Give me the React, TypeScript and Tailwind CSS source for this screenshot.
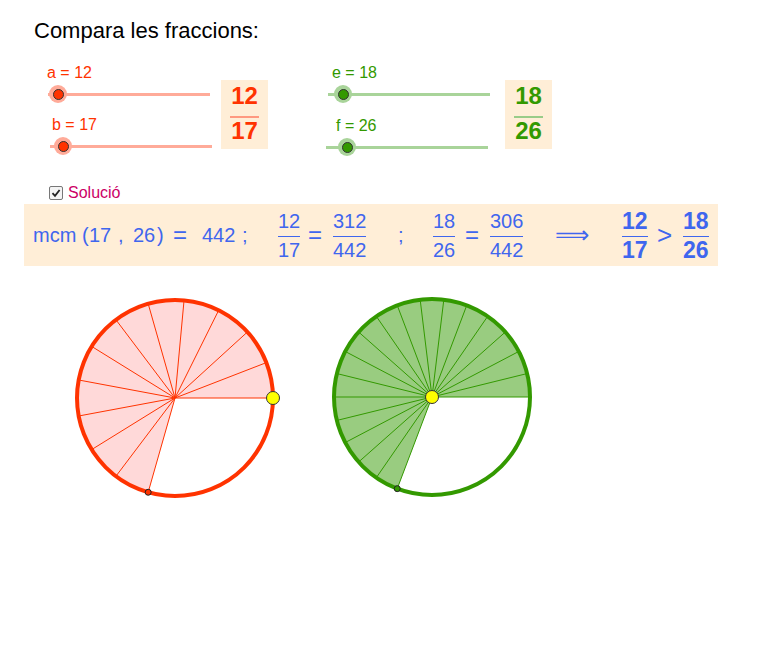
import type { ReactNode } from 'react';

const RED = '#ff3300';
const GREEN = '#339900';
const BLUE = '#3f66ee';

type SliderProps = {
    label: string;
    labelMl: string;
    trackMl: string;
    knobLeft: string;
    color: string;
    track: string;
    halo: string;
    className?: string;
};

function Slider({ label, labelMl, trackMl, knobLeft, color, track, halo, className }: SliderProps) {
    return (
        <div className={className}>
            <div className={`${labelMl} text-[16px] leading-[18px]`} style={{ color }}>
                {label}
            </div>
            <div className={`${trackMl} relative mt-[2px] h-[20px] w-[162px]`}>
                <div className={`absolute left-0 right-0 top-[8.5px] h-[3px] ${track}`} />
                <div className={`absolute top-[1px] ${knobLeft} h-[18px] w-[18px] -translate-x-1/2 rounded-full ${halo} flex items-center justify-center`}>
                    <div className="h-[11px] w-[11px] rounded-full border border-[#333]" style={{ backgroundColor: color }} />
                </div>
            </div>
        </div>
    );
}

function BigFrac({ num, den, color, bar }: { num: string; den: string; color: string; bar: string }) {
    return (
        <div
            className="flex w-[47px] flex-col items-center bg-[#ffeed7] pt-[4px] pb-[6px] text-[24px] font-bold leading-[24px]"
            style={{ color }}
        >
            <div>{num}</div>
            <div className={`mt-[7.5px] h-[2px] w-[29px] ${bar}`} />
            <div className="mt-[1.5px]">{den}</div>
        </div>
    );
}

function Frac({ num, den, bold }: { num: string; den: string; bold?: boolean }) {
    return (
        <span className={`inline-flex flex-col items-center ${bold ? 'font-bold text-[23px]' : ''}`}>
            <span className="pb-[5px] leading-[20px]">{num}</span>
            <span className="h-px w-full bg-[#3f66ee]" />
            <span className="pt-[3px] leading-[20px]">{den}</span>
        </span>
    );
}

function Cell({ w, children, className }: { w: string; children: ReactNode; className?: string }) {
    return <span className={`flex shrink-0 items-center ${w} ${className ?? ''}`}>{children}</span>;
}

function Pie({ cx, cy, r, n, k, stroke, fill, centerDot }: { cx: number; cy: number; r: number; n: number; k: number; stroke: string; fill: string; centerDot: boolean }) {
    const end = (2 * Math.PI * k) / n;
    const ex = cx + r * Math.cos(end);
    const ey = cy - r * Math.sin(end);
    const large = k / n > 0.5 ? 1 : 0;
    const lines = Array.from({ length: k + 1 }, (_, i) => {
        const a = (2 * Math.PI * i) / n;
        return { x: cx + r * Math.cos(a), y: cy - r * Math.sin(a) };
    });
    return (
        <g>
            <path d={`M ${cx} ${cy} L ${cx + r} ${cy} A ${r} ${r} 0 ${large} 0 ${ex} ${ey} Z`} fill={fill} />
            {lines.map((p, i) => (
                <line key={i} x1={cx} y1={cy} x2={p.x} y2={p.y} stroke={stroke} strokeWidth={1} />
            ))}
            <circle cx={cx} cy={cy} r={r} fill="none" stroke={stroke} strokeWidth={4} />
            <circle cx={ex} cy={ey} r={3} fill={stroke} stroke="#222" strokeWidth={1} />
            {centerDot ? (
                <circle cx={cx} cy={cy} r={6.5} fill="#ffff00" stroke="#333" strokeWidth={1} />
            ) : (
                <circle cx={cx + r} cy={cy} r={6.5} fill="#ffff00" stroke="#333" strokeWidth={1} />
            )}
        </g>
    );
}

export default function App() {
    return (
        <div className="h-[658px] w-[781px] overflow-hidden bg-white font-['Liberation_Sans',Arial,sans-serif]">
            <div className="pl-[34px] pt-[18px] text-[22px] leading-[26px] text-black">Compara les fraccions:</div>

            <div className="mt-[20px] flex items-start pl-[46px]">
                <div className="w-[166px]">
                    <Slider label="a = 12" labelMl="ml-[1px]" trackMl="ml-[2px]" knobLeft="left-[10px]" color={RED} track="bg-[#ffab99]" halo="bg-[#ffab99]" />
                    <Slider label="b = 17" labelMl="ml-[6px]" trackMl="ml-[4px]" knobLeft="left-[13px]" color={RED} track="bg-[#ffab99]" halo="bg-[#ffab99]" className="mt-[12px]" />
                </div>
                <div className="ml-[9px] mt-[16px]">
                    <BigFrac num="12" den="17" color={RED} bar="bg-[#ff9980]" />
                </div>
                <div className="ml-[58px] w-[164px]">
                    <Slider label="e = 18" labelMl="ml-[6px]" trackMl="ml-[2px]" knobLeft="left-[15px]" color={GREEN} track="bg-[#a9d49a]" halo="bg-[#a9d49a]" />
                    <Slider label="f = 26" labelMl="ml-[10px]" trackMl="ml-0" knobLeft="left-[21px]" color={GREEN} track="bg-[#a9d49a]" halo="bg-[#a9d49a]" className="mt-[13px]" />
                </div>
                <div className="ml-[15px] mt-[16px]">
                    <BigFrac num="18" den="26" color={GREEN} bar="bg-[#99cc88]" />
                </div>
            </div>

            <div className="mt-[29px] flex h-[14px] items-center pl-[49px]">
                <span className="flex h-[14px] w-[14px] items-center justify-center rounded-[2px] border border-[#777] bg-[#f4f4f4]">
                    <svg width="10" height="10" viewBox="0 0 10 10">
                        <path d="M1.5 5.2 L4 7.8 L8.6 2" fill="none" stroke="#222" strokeWidth="1.8" />
                    </svg>
                </span>
                <span className="ml-[5px] text-[16px] leading-[14px] text-[#cc0066]">Solució</span>
            </div>

            <div className="ml-[24px] mt-[4px] flex h-[62px] w-[694px] items-center bg-[#ffeed7] pl-[9px] text-[20px]" style={{ color: BLUE }}>
                <Cell w="w-[49px]">mcm</Cell>
                <Cell w="w-[7px]">(</Cell>
                <Cell w="w-[29px]">17</Cell>
                <Cell w="w-[15px]">,</Cell>
                <Cell w="w-[24px]">26</Cell>
                <Cell w="w-[16px]">)</Cell>
                <Cell w="w-[29px]" className="text-[24px]">=</Cell>
                <Cell w="w-[40px]">442</Cell>
                <Cell w="w-[36px]">;</Cell>
                <Cell w="w-[30px]"><Frac num="12" den="17" /></Cell>
                <Cell w="w-[25px]" className="text-[24px]">=</Cell>
                <Cell w="w-[65px]"><Frac num="312" den="442" /></Cell>
                <Cell w="w-[35px]">;</Cell>
                <Cell w="w-[32px]"><Frac num="18" den="26" /></Cell>
                <Cell w="w-[25px]" className="text-[24px]">=</Cell>
                <Cell w="w-[65px]"><Frac num="306" den="442" /></Cell>
                <Cell w="w-[67px]" className="font-['DejaVu_Sans',sans-serif] text-[24px]">⟹</Cell>
                <Cell w="w-[35px]"><Frac num="12" den="17" bold /></Cell>
                <Cell w="w-[26px]" className="text-[26px]">&gt;</Cell>
                <Cell w="w-[30px]"><Frac num="18" den="26" bold /></Cell>
            </div>

            <svg width="781" height="391" viewBox="0 267 781 391" className="block">
                <Pie cx={175} cy={399} r={98} n={17} k={12} stroke={RED} fill="#ffd9d9" centerDot={false} />
                <Pie cx={432} cy={398} r={98} n={26} k={18} stroke={GREEN} fill="#99cc80" centerDot />
            </svg>
        </div>
    );
}
